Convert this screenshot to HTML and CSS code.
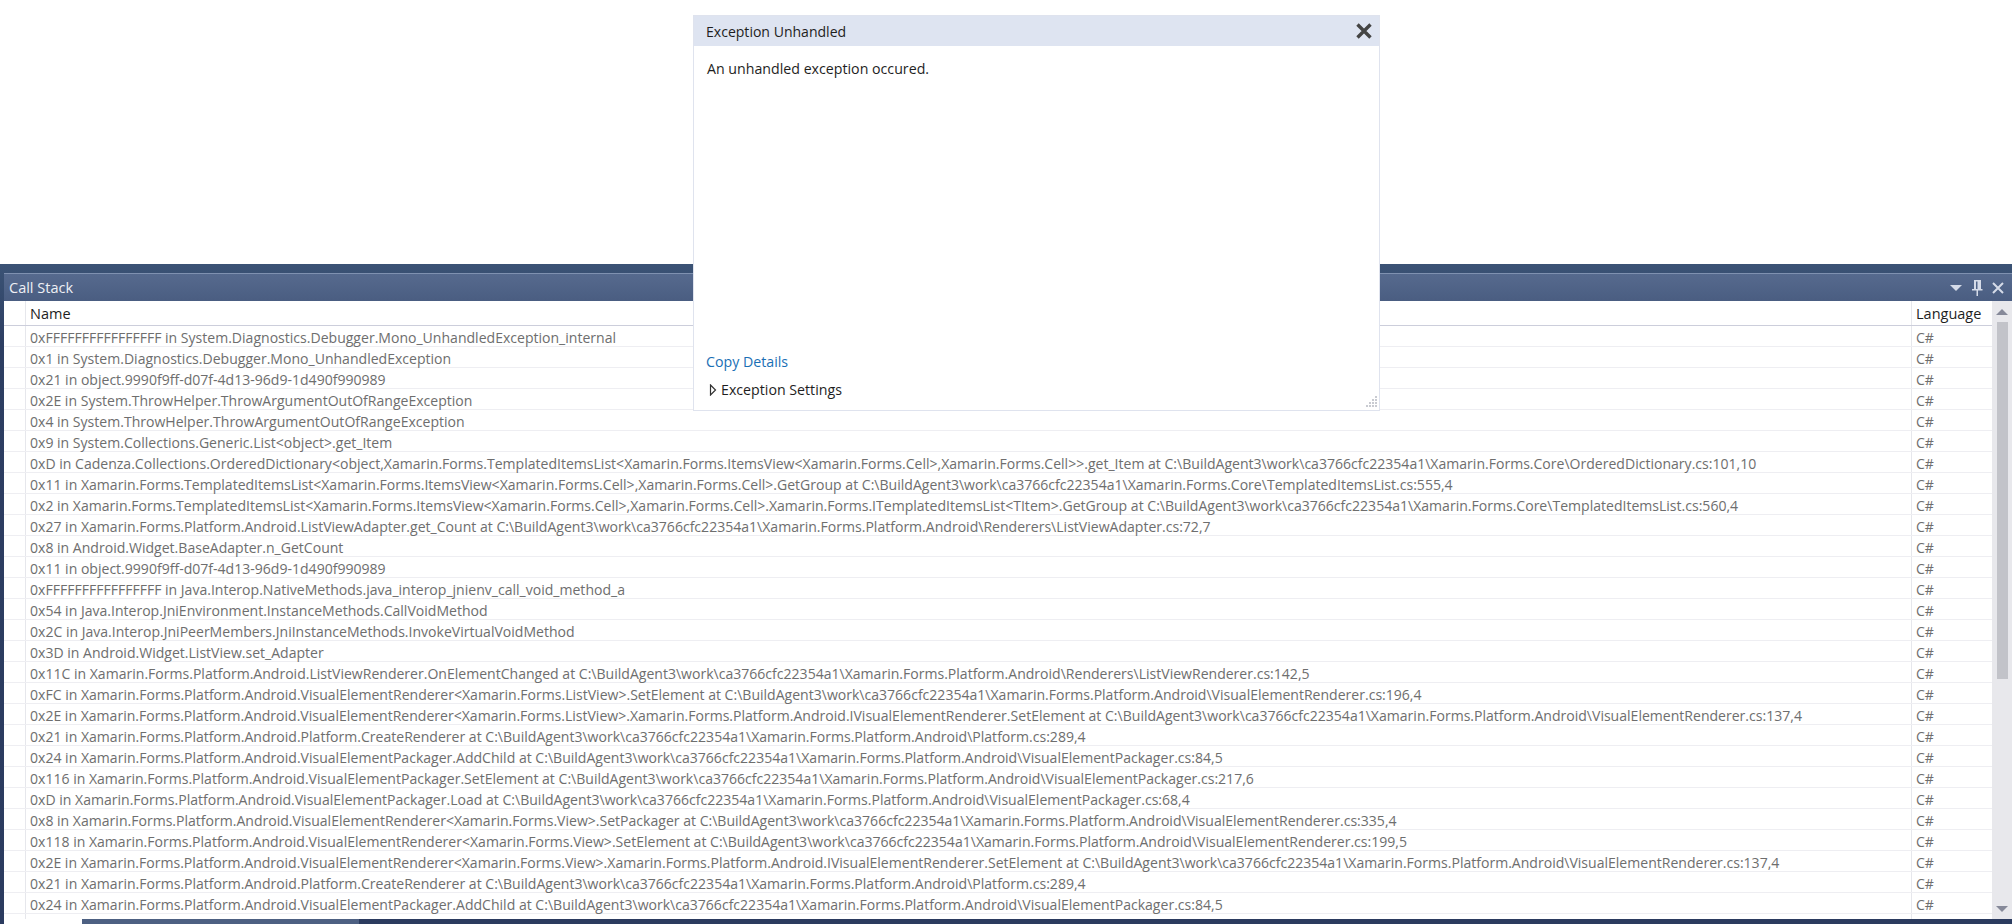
FILE: index.html
```html
<!DOCTYPE html>
<html lang="en">
<head>
<meta charset="utf-8">
<title>Call Stack</title>
<link rel="stylesheet" href="styles.css">
</head>
<body>
<div class="page">
  <div class="blank"></div>
  <div class="dock">
    <section class="panel">
      <header class="titlebar">
        <span class="title">Call Stack</span>
        <span class="tools">
          <svg width="14" height="8" viewBox="0 0 14 8"><path d="M1 1h12L7 7z" fill="#d5dbe8"/></svg>
          <svg width="12" height="18" viewBox="0 0 12 18"><path d="M3 1h7v9h1.500v1.500H7V17H5.500v-5.500H1V10h2zM5 2.500V10h1.500V2.500z" fill="#d5dbe8"/></svg>
          <svg width="14" height="14" viewBox="0 0 14 14"><path d="M2 2l10 10M12 2L2 12" stroke="#d5dbe8" stroke-width="2"/></svg>
        </span>
      </header>
      <div class="body">
        <div class="grid">
          <div class="row head"><span class="gut"></span><span class="name">Name</span><span class="lang">Language</span></div>
          <div class="row"><span class="gut"></span><span class="name">0xFFFFFFFFFFFFFFFF in System.Diagnostics.Debugger.Mono_UnhandledException_internal</span><span class="lang">C#</span></div>
          <div class="row"><span class="gut"></span><span class="name">0x1 in System.Diagnostics.Debugger.Mono_UnhandledException</span><span class="lang">C#</span></div>
          <div class="row"><span class="gut"></span><span class="name">0x21 in object.9990f9ff-d07f-4d13-96d9-1d490f990989</span><span class="lang">C#</span></div>
          <div class="row"><span class="gut"></span><span class="name">0x2E in System.ThrowHelper.ThrowArgumentOutOfRangeException</span><span class="lang">C#</span></div>
          <div class="row"><span class="gut"></span><span class="name">0x4 in System.ThrowHelper.ThrowArgumentOutOfRangeException</span><span class="lang">C#</span></div>
          <div class="row"><span class="gut"></span><span class="name">0x9 in System.Collections.Generic.List&lt;object&gt;.get_Item</span><span class="lang">C#</span></div>
          <div class="row"><span class="gut"></span><span class="name">0xD in Cadenza.Collections.OrderedDictionary&lt;object,Xamarin.Forms.TemplatedItemsList&lt;Xamarin.Forms.ItemsView&lt;Xamarin.Forms.Cell&gt;,Xamarin.Forms.Cell&gt;&gt;.get_Item at C:\BuildAgent3\work\ca3766cfc22354a1\Xamarin.Forms.Core\OrderedDictionary.cs:101,10</span><span class="lang">C#</span></div>
          <div class="row"><span class="gut"></span><span class="name">0x11 in Xamarin.Forms.TemplatedItemsList&lt;Xamarin.Forms.ItemsView&lt;Xamarin.Forms.Cell&gt;,Xamarin.Forms.Cell&gt;.GetGroup at C:\BuildAgent3\work\ca3766cfc22354a1\Xamarin.Forms.Core\TemplatedItemsList.cs:555,4</span><span class="lang">C#</span></div>
          <div class="row"><span class="gut"></span><span class="name">0x2 in Xamarin.Forms.TemplatedItemsList&lt;Xamarin.Forms.ItemsView&lt;Xamarin.Forms.Cell&gt;,Xamarin.Forms.Cell&gt;.Xamarin.Forms.ITemplatedItemsList&lt;TItem&gt;.GetGroup at C:\BuildAgent3\work\ca3766cfc22354a1\Xamarin.Forms.Core\TemplatedItemsList.cs:560,4</span><span class="lang">C#</span></div>
          <div class="row"><span class="gut"></span><span class="name">0x27 in Xamarin.Forms.Platform.Android.ListViewAdapter.get_Count at C:\BuildAgent3\work\ca3766cfc22354a1\Xamarin.Forms.Platform.Android\Renderers\ListViewAdapter.cs:72,7</span><span class="lang">C#</span></div>
          <div class="row"><span class="gut"></span><span class="name">0x8 in Android.Widget.BaseAdapter.n_GetCount</span><span class="lang">C#</span></div>
          <div class="row"><span class="gut"></span><span class="name">0x11 in object.9990f9ff-d07f-4d13-96d9-1d490f990989</span><span class="lang">C#</span></div>
          <div class="row"><span class="gut"></span><span class="name">0xFFFFFFFFFFFFFFFF in Java.Interop.NativeMethods.java_interop_jnienv_call_void_method_a</span><span class="lang">C#</span></div>
          <div class="row"><span class="gut"></span><span class="name">0x54 in Java.Interop.JniEnvironment.InstanceMethods.CallVoidMethod</span><span class="lang">C#</span></div>
          <div class="row"><span class="gut"></span><span class="name">0x2C in Java.Interop.JniPeerMembers.JniInstanceMethods.InvokeVirtualVoidMethod</span><span class="lang">C#</span></div>
          <div class="row"><span class="gut"></span><span class="name">0x3D in Android.Widget.ListView.set_Adapter</span><span class="lang">C#</span></div>
          <div class="row"><span class="gut"></span><span class="name">0x11C in Xamarin.Forms.Platform.Android.ListViewRenderer.OnElementChanged at C:\BuildAgent3\work\ca3766cfc22354a1\Xamarin.Forms.Platform.Android\Renderers\ListViewRenderer.cs:142,5</span><span class="lang">C#</span></div>
          <div class="row"><span class="gut"></span><span class="name">0xFC in Xamarin.Forms.Platform.Android.VisualElementRenderer&lt;Xamarin.Forms.ListView&gt;.SetElement at C:\BuildAgent3\work\ca3766cfc22354a1\Xamarin.Forms.Platform.Android\VisualElementRenderer.cs:196,4</span><span class="lang">C#</span></div>
          <div class="row"><span class="gut"></span><span class="name">0x2E in Xamarin.Forms.Platform.Android.VisualElementRenderer&lt;Xamarin.Forms.ListView&gt;.Xamarin.Forms.Platform.Android.IVisualElementRenderer.SetElement at C:\BuildAgent3\work\ca3766cfc22354a1\Xamarin.Forms.Platform.Android\VisualElementRenderer.cs:137,4</span><span class="lang">C#</span></div>
          <div class="row"><span class="gut"></span><span class="name">0x21 in Xamarin.Forms.Platform.Android.Platform.CreateRenderer at C:\BuildAgent3\work\ca3766cfc22354a1\Xamarin.Forms.Platform.Android\Platform.cs:289,4</span><span class="lang">C#</span></div>
          <div class="row"><span class="gut"></span><span class="name">0x24 in Xamarin.Forms.Platform.Android.VisualElementPackager.AddChild at C:\BuildAgent3\work\ca3766cfc22354a1\Xamarin.Forms.Platform.Android\VisualElementPackager.cs:84,5</span><span class="lang">C#</span></div>
          <div class="row"><span class="gut"></span><span class="name">0x116 in Xamarin.Forms.Platform.Android.VisualElementPackager.SetElement at C:\BuildAgent3\work\ca3766cfc22354a1\Xamarin.Forms.Platform.Android\VisualElementPackager.cs:217,6</span><span class="lang">C#</span></div>
          <div class="row"><span class="gut"></span><span class="name">0xD in Xamarin.Forms.Platform.Android.VisualElementPackager.Load at C:\BuildAgent3\work\ca3766cfc22354a1\Xamarin.Forms.Platform.Android\VisualElementPackager.cs:68,4</span><span class="lang">C#</span></div>
          <div class="row"><span class="gut"></span><span class="name">0x8 in Xamarin.Forms.Platform.Android.VisualElementRenderer&lt;Xamarin.Forms.View&gt;.SetPackager at C:\BuildAgent3\work\ca3766cfc22354a1\Xamarin.Forms.Platform.Android\VisualElementRenderer.cs:335,4</span><span class="lang">C#</span></div>
          <div class="row"><span class="gut"></span><span class="name">0x118 in Xamarin.Forms.Platform.Android.VisualElementRenderer&lt;Xamarin.Forms.View&gt;.SetElement at C:\BuildAgent3\work\ca3766cfc22354a1\Xamarin.Forms.Platform.Android\VisualElementRenderer.cs:199,5</span><span class="lang">C#</span></div>
          <div class="row"><span class="gut"></span><span class="name">0x2E in Xamarin.Forms.Platform.Android.VisualElementRenderer&lt;Xamarin.Forms.View&gt;.Xamarin.Forms.Platform.Android.IVisualElementRenderer.SetElement at C:\BuildAgent3\work\ca3766cfc22354a1\Xamarin.Forms.Platform.Android\VisualElementRenderer.cs:137,4</span><span class="lang">C#</span></div>
          <div class="row"><span class="gut"></span><span class="name">0x21 in Xamarin.Forms.Platform.Android.Platform.CreateRenderer at C:\BuildAgent3\work\ca3766cfc22354a1\Xamarin.Forms.Platform.Android\Platform.cs:289,4</span><span class="lang">C#</span></div>
          <div class="row"><span class="gut"></span><span class="name">0x24 in Xamarin.Forms.Platform.Android.VisualElementPackager.AddChild at C:\BuildAgent3\work\ca3766cfc22354a1\Xamarin.Forms.Platform.Android\VisualElementPackager.cs:84,5</span><span class="lang">C#</span></div>
          <div class="row tail"><span class="gut"></span><span class="name"></span><span class="lang"></span></div>
        </div>
        <aside class="scrollbar">
          <svg class="arrow" width="14" height="8" viewBox="0 0 14 8"><path d="M7 1l6 6H1z" fill="#868999"/></svg>
          <div class="thumb"></div>
          <svg class="arrow" width="14" height="8" viewBox="0 0 14 8"><path d="M1 1h12L7 7z" fill="#868999"/></svg>
        </aside>
      </div>
    </section>
    <div class="tabs"><span class="tab-gap"></span><span class="tab-on"></span></div>
  </div>
  <section class="dialog">
    <header class="dlg-head">
      <span>Exception Unhandled</span>
      <svg width="18" height="18" viewBox="0 0 18 18"><path d="M2.500 2.500l13 13M15.500 2.500l-13 13" stroke="#444" stroke-width="3.400"/></svg>
    </header>
    <p class="dlg-msg">An unhandled exception occured.</p>
    <a class="dlg-link">Copy Details</a>
    <div class="dlg-settings">
      <svg width="8" height="12" viewBox="0 0 8 12"><path d="M1.500 1l5 5-5 5z" fill="#fff" stroke="#333" stroke-width="1.200"/></svg>
      <span>Exception Settings</span>
    </div>
    <svg class="grip" width="16" height="14" viewBox="0 0 16 14"><path d="M12 1h2v2h-2zM12 4h2v2h-2zM9 4h2v2H9zM12 7h2v2h-2zM9 7h2v2H9zM6 7h2v2H6zM12 10h2v2h-2zM9 10h2v2H9zM6 10h2v2H6zM3 10h2v2H3z" fill="#c9cbd1"/></svg>
  </section>
</div>
</body>
</html>
```
FILE: styles.css
```css
* { box-sizing: border-box; }
html, body { margin: 0; padding: 0; background: #fff; }
body { font-family: "Open Sans", "Noto Sans", sans-serif; font-size: 14.06px; overflow: hidden; }
.page { position: relative; width: 2012px; height: 924px; display: flex; flex-direction: column; }
.blank { height: 264px; flex: none; }
.dock { flex: 1; min-height: 0; display: flex; flex-direction: column; padding: 9px 0 0 4px; background: linear-gradient(#3b5375, #2d3e62 12%, #2b3b5f); }
.panel { flex: 1; min-height: 0; display: flex; flex-direction: column; background: #fff; }
.titlebar { height: 28px; flex: none; display: flex; align-items: center; justify-content: space-between; padding: 0 7px 0 5px; background: linear-gradient(#566a8e, #4a5d81); border-top: 1px solid #7f91b0; color: #eef0f5; font-size: 14.5px; }
.tools { display: flex; align-items: center; gap: 8px; }
.body { flex: 1; min-height: 0; display: flex; }
.grid { flex: 1; min-width: 0; display: flex; flex-direction: column; overflow: hidden; }
.row { height: 21px; flex: none; display: flex; align-items: center; padding-top: 2px; border-bottom: 1px solid #eeeef2; color: #6e6e6e; white-space: nowrap; }
.gut, .lang { margin-top: -2px; }
.row.head { height: 25px; padding-top: 0; border-bottom: 1px solid #cccedb; color: #1e1e1e; font-size: 14.5px; }
.row.head .gut, .row.head .lang, .row.tail .gut, .row.tail .lang { margin-top: 0; }
.row.tail { height: 6px; padding-top: 0; border-bottom: 0; }
.gut { width: 22px; flex: none; align-self: stretch; border-right: 1px solid #e6e7ec; }
.name { flex: 1; min-width: 0; padding-left: 4px; }
.lang { width: 81px; flex: none; align-self: stretch; display: flex; align-items: center; padding-left: 4px; padding-top: 2px; border-left: 1px solid #e6e7ec; }
.row.head .lang { padding-top: 0; }
.scrollbar { width: 20px; flex: none; display: flex; flex-direction: column; align-items: center; background: #e8e8ec; padding: 7px 0 6px; }
.arrow { flex: none; }
.thumb { width: 11px; height: 357px; margin-top: 6px; margin-bottom: auto; background: #c2c3c9; }
.tabs { height: 5px; flex: none; display: flex; background: #2b3b5f; }
.tab-gap { width: 78px; background: #fff; }
.tab-on { width: 277px; background: #4d6082; }
.dialog { position: absolute; left: 693px; top: 15px; width: 687px; height: 396px; display: flex; flex-direction: column; background: #fff; border: 1px solid #dfe3ee; color: #1e1e1e; font-size: 14.2px; }
.dlg-head { height: 30px; flex: none; display: flex; align-items: center; justify-content: space-between; padding: 0 6px 0 12px; background: #dee4f1; font-size: 14.05px; }
.dlg-msg { margin: 13px 0 0 13px; flex: 1; }
.dlg-link { margin-left: 12px; color: #1a6fb5; line-height: 20px; }
.dlg-settings { display: flex; align-items: center; gap: 4px; margin: 8px 0 10px 15px; line-height: 20px; }
.grip { position: absolute; right: 0; bottom: 1px; }
```
